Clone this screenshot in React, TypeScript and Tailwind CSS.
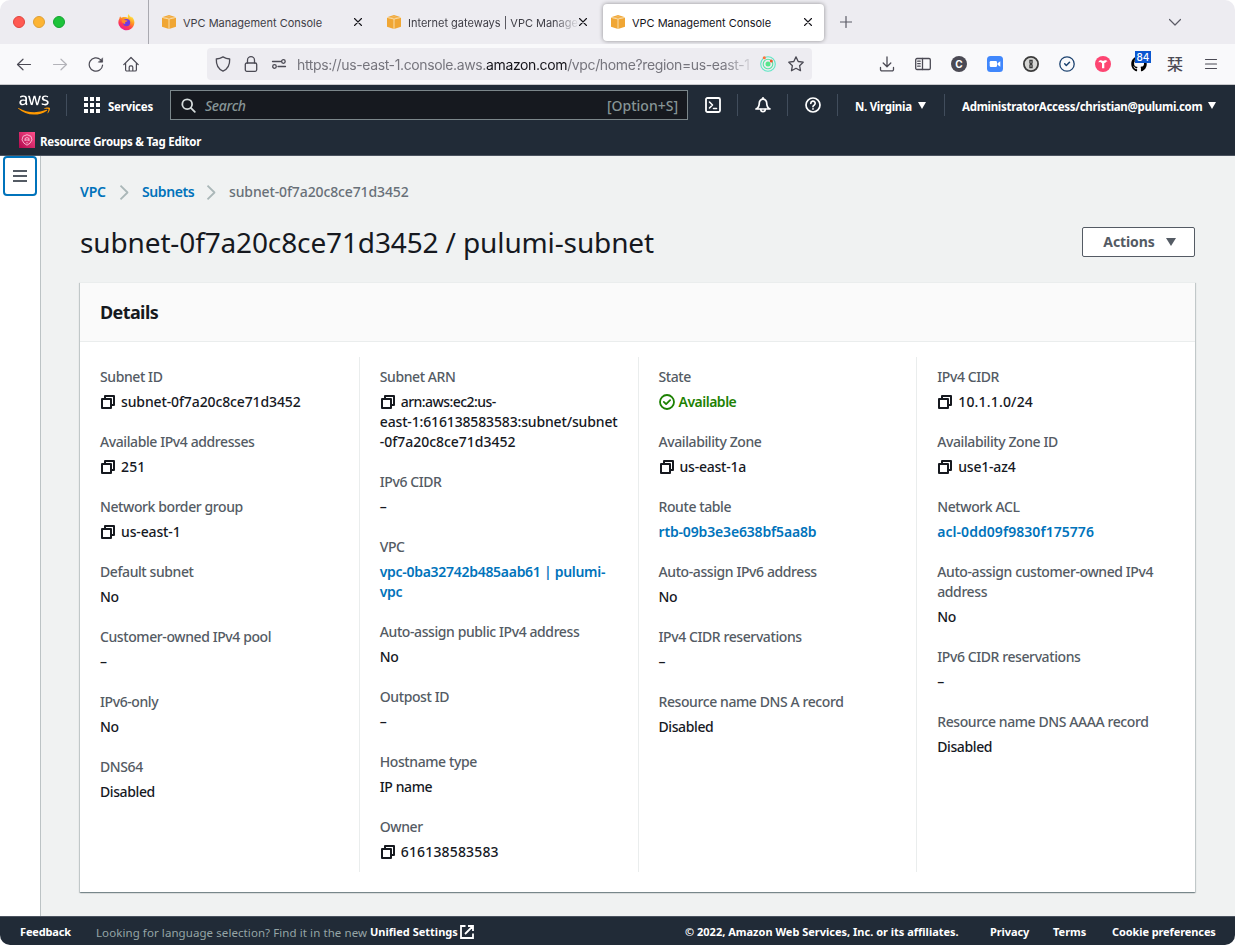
import type { ReactNode } from "react";
import { FaAws, FaGithub } from "react-icons/fa";

const stroke = {
  fill: "none",
  stroke: "currentColor",
  strokeLinecap: "round" as const,
  strokeLinejoin: "round" as const,
};

function BoxIcon() {
  return (
    <svg className="size-[14px] shrink-0" viewBox="0 0 14 14">
      <path d="M0 2.2 7 0l7 2.2v9.6L7 14l-7-2.2z" fill="#f0a634" />
      <path d="M0 2.4 7 4l7-1.6M7 4v10" stroke="#fbe3b8" strokeWidth="0.9" fill="none" />
      <path d="M2.2 3 7 1.7 11.8 3" stroke="#f8cf8c" strokeWidth="0.6" fill="none" />
    </svg>
  );
}

function CloseIcon() {
  return (
    <svg className="block size-[8px] shrink-0 text-[#15141a]" viewBox="0 0 8 8" {...stroke} strokeWidth="1.1">
      <path d="M.5.5l7 7M7.5.5l-7 7" />
    </svg>
  );
}

function Firefox() {
  return (
    <svg className="size-[17px]" viewBox="0 0 17 17">
      <defs>
        <linearGradient id="ff" x1="0.8" y1="0" x2="0.25" y2="1">
          <stop offset="0.1" stopColor="#ffe440" />
          <stop offset="0.4" stopColor="#ff9a22" />
          <stop offset="0.7" stopColor="#ff3b50" />
          <stop offset="1" stopColor="#e9189b" />
        </linearGradient>
      </defs>
      <path d="M10.5 0c.5 1.6 2 2.3 2.8 3.5.4-.3.3-.7.2-1 1.800 1.500 2.900 3.700 2.900 6A8 8 0 1 1 1.500 4.200c0-.8.3-1.500.7-2 .2.7.6 1.200 1.200 1.500C4.400 3.100 5.400 2.800 6.400 3 8 3 9.300 3.400 10.200 4 9.600 2.700 9.700 1.100 10.500 0z" fill="url(#ff)" />
      <circle cx="8.600" cy="8.600" r="3.600" fill="#7139e0" />
      <path d="M3.600 6.300c1.300-.9 2.800-.8 3.900 0 1 .1 1.900.1 2 .5-.1.700-1 .9-1.800 1.200-.8.400-.8 1.200-.2 1.800-1.800.5-3.600-.8-3.900-3.500z" fill="#ff8a2b" />
    </svg>
  );
}

function Tab({ title, titleClass = "" }: { title: string; titleClass?: string }) {
  return (
    <div className="flex h-full w-[225px] items-center pl-[13px] pr-[12px]">
      <BoxIcon />
      <span className={"ml-[7px] whitespace-nowrap pt-[3px] text-[11px] tracking-[-0.02px] " + titleClass}>{title}</span>
      <span className="ml-auto"><CloseIcon /></span>
    </div>
  );
}

function TabStrip() {
  return (
    <div className="flex h-[44px] items-center rounded-t-[10px] bg-[#edecf1] font-['Inter',sans-serif] text-[#3f3e46]">
      <div className="flex h-full w-[149px] items-center border-r border-[#a9a9b0] pl-[13px]">
        <i className="size-[12px] rounded-full border border-[#e0443e] bg-[#ff5a52]" />
        <i className="ml-[8px] size-[12px] rounded-full border border-[#dea035] bg-[#fdb433]" />
        <i className="ml-[8px] size-[12px] rounded-full border border-[#14a332] bg-[#1dc33a]" />
        <span className="ml-[53px]"><Firefox /></span>
      </div>
      <Tab title="VPC Management Console" />
      <Tab title="Internet gateways | VPC Manage" titleClass="[mask-image:linear-gradient(to_right,#000_145px,transparent_172px)]" />
      <div className="ml-[4px] flex h-[37px] w-[221px] items-center rounded-[4px] bg-white pl-[8px] pr-[12px] text-[#15141a] shadow-[0_0_4px_rgba(0,0,0,0.4)]">
        <BoxIcon />
        <span className="ml-[7px] whitespace-nowrap pt-[3px] text-[11px] tracking-[-0.02px]">VPC Management Console</span>
        <span className="ml-auto"><CloseIcon /></span>
      </div>
      <svg className="ml-[16px] size-[12px] text-[#5b5b66]" viewBox="0 0 12 12" {...stroke} strokeWidth="1.2"><path d="M6 .5v11M.5 6h11" /></svg>
      <svg className="ml-auto mr-[54px] size-[12px] text-[#5b5b66]" viewBox="0 0 12 12" {...stroke} strokeWidth="1.2"><path d="M.5 3.500 6 9l5.500-5.500" /></svg>
    </div>
  );
}

function Toolbar() {
  return (
    <div className="flex h-[40px] items-center bg-[#f9f9fb] pl-[16px] font-['Inter',sans-serif] text-[#4b4a54]">
      <svg className="size-[16px]" viewBox="0 0 16 16" {...stroke} strokeWidth="1.2"><path d="M14.500 8.500H1.500M7 3.200 1.500 8.500 7 13.800" /></svg>
      <svg className="ml-[20px] size-[16px] text-[#b3b3b9]" viewBox="0 0 16 16" {...stroke} strokeWidth="1.2"><path d="M1.500 8.500h13M9 3.200l5.500 5.300L9 13.800" /></svg>
      <svg className="ml-[20px] size-[16px]" viewBox="0 0 16 16" {...stroke} strokeWidth="1.2"><path d="M14.600 9A6.700 6.700 0 1 1 12.500 3.600L14 5" /><path d="M14.600 2.200v4h-4z" fill="currentColor" strokeWidth=".6" /></svg>
      <svg className="ml-[19px] size-[16px]" viewBox="0 0 16 16" {...stroke} strokeWidth="1.200"><path d="M.8 8.700 8 1.500l7.200 7.200M2.600 7v6.700A1.300 1.300 0 0 0 3.900 15h8.200a1.300 1.300 0 0 0 1.300-1.300V7M6.200 14.700v-3.500a1.300 1.300 0 0 1 1.300-1.300h1a1.300 1.300 0 0 1 1.300 1.300v3.500" /></svg>
      <div className="ml-[68px] flex h-[32px] w-[605px] items-center rounded-[4px] bg-[#edecf1] pl-[8px]">
        <svg className="size-[16px]" viewBox="0 0 16 16" {...stroke} strokeWidth="1.3"><path d="M8 .9c2.100 1.300 4.500 2 6.700 2.100.2 5.200-1.500 9.900-6.700 12.100C2.800 12.900 1.100 8.200 1.300 3 3.500 2.900 5.900 2.200 8 .9z" /></svg>
        <svg className="ml-[12px] size-[16px]" viewBox="0 0 16 16" {...stroke} strokeWidth="1.300"><rect x="2.300" y="7" width="11.400" height="8.300" rx="1.500" /><path d="M4.500 7V4.200a3.500 3.500 0 0 1 7 0V7" /></svg>
        <svg className="ml-[12px] size-[16px]" viewBox="0 0 16 16" {...stroke} strokeWidth="1.300"><path d="M1.500 5.500h8M7 10.500h7.500" /><circle cx="12.400" cy="5.500" r="1.800" /><circle cx="3.500" cy="10.500" r="1.800" /></svg>
        <div className="ml-[10px] w-[458px] whitespace-nowrap pt-px text-[14px] tracking-[-0.37px] text-[#76757d] [mask-image:linear-gradient(to_right,#000_425px,transparent_460px)]">
          https://us-east-1.console.aws.<span className="text-[#15141a]">amazon.com</span>/vpc/home?region=us-east-1
        </div>
        <svg className="ml-[5px] size-[16px]" viewBox="0 0 16 16"><circle cx="8" cy="8" r="7.300" fill="none" stroke="#5ee6c4" strokeWidth="1.100" /><circle cx="8" cy="8" r="4.800" fill="none" stroke="#55e5a0" strokeWidth="1.100" /><circle cx="8" cy="8" r="2.500" fill="#57e58b" /><circle cx="4.300" cy="1.800" r="1.500" fill="#ff7139" /><circle cx="11.300" cy="5" r="1.500" fill="#f4562b" /></svg>
        <svg className="ml-[12px] size-[16px]" viewBox="0 0 16 16" {...stroke} strokeWidth="1.300"><path d="m8 .9 2.200 4.600 5 .7-3.600 3.500.9 5L8 12.300l-4.500 2.400.9-5L.8 6.200l5-.7z" /></svg>
      </div>
      <div className="ml-auto mr-[16px] flex items-center gap-[20px]">
        <svg className="size-[16px]" viewBox="0 0 16 16" {...stroke} strokeWidth="1.300"><path d="M8 1v9.500M4.200 7 8 10.700 11.800 7M1.500 11.500v2a1.400 1.400 0 0 0 1.400 1.400h10.200a1.400 1.400 0 0 0 1.400-1.400v-2" /></svg>
        <svg className="size-[16px]" viewBox="0 0 16 16" {...stroke} strokeWidth="1.300"><rect x=".7" y="2.500" width="14.600" height="11" rx="1.300" /><path d="M7.500 2.500v11M2.700 5.200h2.500M2.700 7.700h2.500M2.700 10.200h2.500" /></svg>
        <span className="flex size-[16px] items-center justify-center rounded-full bg-[#4b4a54] text-[10px] font-bold text-white">C</span>
        <svg className="size-[16px]" viewBox="0 0 16 16"><rect width="16" height="16" rx="3.500" fill="#4087fc" /><rect x="2.700" y="5" width="7.300" height="6" rx="1.200" fill="#fff" /><path d="m10.500 7.300 2.800-2v5.400l-2.800-2z" fill="#fff" /></svg>
        <svg className="size-[16px]" viewBox="0 0 16 16"><circle cx="8" cy="8" r="7.100" fill="#d6d6d4" stroke="#3b3b3b" strokeWidth="1.800" /><path d="M6.300 3.700h3.400v3.600l-.7.7.7.8v3.500H6.300V8.800L7 8l-.7-.7z" fill="#3b3b3b" /><path d="M8 5v2M8 9v2" stroke="#d6d6d4" strokeWidth=".7" /></svg>
        <svg className="size-[16px]" viewBox="0 0 16 16" {...stroke} stroke="#1d4370" strokeWidth="1.300"><circle cx="8" cy="8" r="7.200" /><path d="m5.700 7.800 1.600 1.700 3.200-3.300" strokeWidth="1.500" /></svg>
        <svg className="size-[16px]" viewBox="0 0 16 16"><circle cx="8" cy="8" r="8" fill="#fd4572" /><path d="M3.300 6.300C4 3.800 6.500 3.700 8 4.900c1.700-1.200 3.800-.9 4.500.6-1 .1-1.700.2-2 1.300L9.300 7v5.300H7V7.200L5.300 6z" fill="#fff" /></svg>
        <span className="relative flex size-[16px]">
          <FaGithub className="size-[16px] text-black" />
          <span className="absolute -top-[5px] left-[4px] flex h-[12px] w-[16px] items-center justify-center bg-[#0b57d0] text-[10px] font-medium text-white">84</span>
        </span>
        <span className="w-[16px] text-[16px] font-medium leading-[16px] font-['Noto_Sans_CJK_JP',sans-serif] -mt-[2px]">栞</span>
        <svg className="size-[16px]" viewBox="0 0 16 16" {...stroke} strokeWidth="1.200"><path d="M2.500 3.500h11M2.500 8h11M2.500 12.500h11" /></svg>
      </div>
    </div>
  );
}

function Caret({ className }: { className: string }) {
  return <svg className={"shrink-0 " + className} viewBox="0 0 10 8" preserveAspectRatio="none"><path d="M0 0h10L5 8z" fill="currentColor" /></svg>;
}

function Sep() {
  return <i className="h-[22px] w-px shrink-0 bg-[#414d5c]" />;
}

function ConsoleNav() {
  return (
    <header className="h-[72px] border-y border-b-[#4b535f] border-t-[#c9c9cc] bg-[#212b37] text-white">
      <div className="flex h-[40px] items-center whitespace-nowrap">
        <svg width="0" height="0" className="w-0">
          <linearGradient id="aws" gradientUnits="userSpaceOnUse" x1="0" y1="0" x2="0" y2="512">
            <stop offset="0.58" stopColor="#fff" /><stop offset="0.58" stopColor="#ff9900" />
          </linearGradient>
        </svg>
        <FaAws className="ml-[18px] mr-[16px] h-[26px] w-[32px]" fill="url(#aws)" />
        <Sep />
        <svg className="ml-[17px] size-[16px]" viewBox="0 0 16 16" fill="currentColor">
          {[0, 6, 12].map((y) => [0, 6, 12].map((x) => <rect key={x + "-" + y} x={x} y={y} width="4" height="4" />))}
        </svg>
        <span className="ml-[8px] w-[54px] pt-[3px] text-[11.500px] font-bold tracking-[-0.25px]">Services</span>
        <div className="ml-[8px] flex h-[30px] w-[518px] items-center border border-[#7b868a] bg-[#16191f] pl-[10px] pr-[9px] text-[14px] font-medium text-[#879596]">
          <svg className="size-[15px] text-[#d5dbdb]" viewBox="0 0 15 15" {...stroke} strokeWidth="1.800"><circle cx="6.200" cy="6.200" r="4.900" /><path d="m9.800 9.800 4 4" /></svg>
          <span className="ml-[9px] italic tracking-[-0.3px]">Search</span>
          <span className="ml-auto tracking-[0px]">[Option+S]</span>
        </div>
        <svg className="ml-[17px] size-[16px]" viewBox="0 0 16 16" {...stroke} strokeWidth="1.800"><rect x="1" y="1" width="14" height="14" rx="1.500" /><path d="m4.500 5 3 3-3 3M8.500 11.500h3" strokeWidth="1.600" /></svg>
        <span className="ml-[16px] flex"><Sep /></span>
        <svg className="ml-[17px] size-[16px]" viewBox="0 0 16 16" {...stroke} strokeWidth="1.700"><path d="M1 12c2.700-1.300 3.300-3.500 3.300-6A3.700 3.700 0 0 1 8 2.200 3.700 3.700 0 0 1 11.700 6c0 2.500.6 4.700 3.300 6z" /><path d="M8 .8v1.400M5.800 12.400a2.200 2.200 0 0 0 4.400 0" /></svg>
        <span className="ml-[16px] flex"><Sep /></span>
        <svg className="ml-[17px] size-[16px]" viewBox="0 0 16 16" {...stroke} strokeWidth="1.700"><circle cx="8" cy="8" r="7" /><path d="M5.800 6.300a2.200 2.200 0 1 1 3.300 1.900C8.300 8.600 8 8.900 8 9.600M8 11.800v.1" /></svg>
        <span className="ml-[16px] flex"><Sep /></span>
        <span className="ml-[17px] w-[57px] pt-[3px] text-[11.500px] font-bold tracking-[-0.3px]">N. Virginia</span>
        <Caret className="ml-[6px] h-[7px] w-[8px]" />
        <span className="ml-[18px] flex"><Sep /></span>
        <span className="ml-[17px] w-[241px] pt-[3px] text-[11.500px] font-bold tracking-[-0.3px]">AdministratorAccess/christian@pulumi.com</span>
        <Caret className="ml-[5px] h-[7px] w-[8px]" />
      </div>
      <div className="flex h-[30px] items-center pl-[19px]">
        <svg className="size-[16px]" viewBox="0 0 16 16">
          <defs><linearGradient id="rg" x1="0" y1="1" x2="1" y2="0"><stop stopColor="#b0084d" /><stop offset="1" stopColor="#ff4f8b" /></linearGradient></defs>
          <rect width="16" height="16" fill="url(#rg)" />
          <path d="M8 2.700 12 4.300l1 3.600-2 3.300L8 13.200 5 11.200 3 7.900l1-3.600zM6 9V6.500l2-1 2 1V9M6 8h4M8 10v1.500" fill="none" stroke="#ffd5e4" strokeWidth=".8" />
        </svg>
        <span className="ml-[5px] whitespace-nowrap pt-[3px] text-[11.500px] font-bold tracking-[-0.26px]">Resource Groups &amp; Tag Editor</span>
      </div>
    </header>
  );
}

function CopyIcon() {
  return (
    <svg className="mr-[6px] ml-[1px] inline-block size-[14px] shrink-0 align-[-2px]" viewBox="0 0 14 14" fill="none" stroke="#16191f" strokeWidth="2" strokeLinejoin="round">
      <path d="M1 4h9v9H1zM4 4V1h9v9h-3" />
    </svg>
  );
}

function Field({ label, children, spacing = "tracking-[-0.4px]" }: { label: ReactNode; children: ReactNode; spacing?: string }) {
  return (
    <div className="flex flex-col gap-[5px]">
      <dt className="tracking-[-0.41px] text-[#545b64]">{label}</dt>
      <dd className={"text-[#16191f] " + spacing}>{children}</dd>
    </div>
  );
}

function Column({ children, first }: { children: ReactNode; first?: boolean }) {
  return (
    <dl className={"flex flex-col gap-[20px] whitespace-nowrap border-l py-[10px] " + (first ? "border-transparent pl-[19px]" : "border-[#eaeded] pl-[20px]")}>
      {children}
    </dl>
  );
}

function Link({ children, spacing = "tracking-[-0.4px]" }: { children: ReactNode; spacing?: string }) {
  return <a className={"font-semibold text-[#0073bb] " + spacing}>{children}</a>;
}

function Chevron({ className }: { className: string }) {
  return <svg className={"h-[15px] w-[10px] text-[#aab7b8] " + className} viewBox="0 0 10 15" {...stroke} strokeLinecap="butt" strokeWidth="1.800"><path d="m1.500.7 7 6.800-7 6.800" /></svg>;
}

function Details() {
  return (
    <section className="mt-[25px] h-[610px] border-t border-[#eaeded] bg-white shadow-[0_1px_1px_0_rgba(0,28,36,0.3),1px_1px_1px_0_rgba(0,28,36,0.15),-1px_1px_1px_0_rgba(0,28,36,0.15)]">
      <div className="flex h-[59px] items-center border-b border-[#eaeded] bg-[#fafafa] pl-[20px]">
        <h2 className="text-[18px] font-bold tracking-[-0.6px] text-[#16191f]">Details</h2>
      </div>
      <div className="mt-[15px] grid h-[515px] grid-cols-4 text-[14px] font-medium leading-[20px]">
        <Column first>
          <Field label="Subnet ID" spacing="tracking-[-0.12px]"><CopyIcon />subnet-0f7a20c8ce71d3452</Field>
          <Field label="Available IPv4 addresses" spacing="tracking-[0.15px]"><CopyIcon />251</Field>
          <Field label="Network border group" spacing="tracking-[-0.14px]"><CopyIcon />us-east-1</Field>
          <Field label="Default subnet">No</Field>
          <Field label="Customer-owned IPv4 pool">–</Field>
          <Field label="IPv6-only">No</Field>
          <Field label="DNS64">Disabled</Field>
        </Column>
        <Column>
          <Field label="Subnet ARN" spacing="tracking-[-0.15px]">
            <CopyIcon /><span className="tracking-[-0.55px]">arn:aws:ec2:us-</span><br />east-1:616138583583:subnet/subnet<br /><span className="tracking-[-0.02px]">-0f7a20c8ce71d3452</span>
          </Field>
          <Field label="IPv6 CIDR">–</Field>
          <Field label="VPC"><Link spacing="tracking-[-0.29px]">vpc-0ba32742b485aab61 | pulumi-<br />vpc</Link></Field>
          <Field label="Auto-assign public IPv4 address">No</Field>
          <Field label="Outpost ID">–</Field>
          <Field label="Hostname type">IP name</Field>
          <Field label="Owner" spacing="tracking-[0.16px]"><CopyIcon />616138583583</Field>
        </Column>
        <Column>
          <Field label="State">
            <span className="flex items-center font-semibold tracking-[-0.5px] text-[#1d8102]">
              <svg className="mr-[4px] size-[16px]" viewBox="0 0 16 16" {...stroke} strokeWidth="1.800"><circle cx="8" cy="8" r="7" /><path d="m4.800 7.900 2.300 2.200 4-4" /></svg>
              Available
            </span>
          </Field>
          <Field label="Availability Zone" spacing="tracking-[-0.22px]"><CopyIcon />us-east-1a</Field>
          <Field label="Route table"><Link spacing="tracking-[-0.16px]">rtb-09b3e3e638bf5aa8b</Link></Field>
          <Field label="Auto-assign IPv6 address">No</Field>
          <Field label="IPv4 CIDR reservations">–</Field>
          <Field label="Resource name DNS A record">Disabled</Field>
        </Column>
        <Column>
          <Field label="IPv4 CIDR" spacing="tracking-[0.17px]"><CopyIcon />10.1.1.0/24</Field>
          <Field label="Availability Zone ID" spacing="tracking-[-0.2px]"><CopyIcon />use1-az4</Field>
          <Field label="Network ACL"><Link spacing="tracking-[0.05px]">acl-0dd09f9830f175776</Link></Field>
          <Field label={<>Auto-assign customer-owned IPv4<br />address</>}>No</Field>
          <Field label="IPv6 CIDR reservations">–</Field>
          <Field label="Resource name DNS AAAA record">Disabled</Field>
        </Column>
      </div>
    </section>
  );
}

export default function App() {
  return (
    <div className="flex h-[945px] w-[1235px] flex-col overflow-hidden bg-white font-['Noto_Sans',sans-serif]">
      <TabStrip />
      <Toolbar />
      <ConsoleNav />
      <div className="flex h-[760px]">
        <aside className="w-[41px] shrink-0 border-r border-[#bcc3c5] bg-white pl-[3px]">
          <button className="flex h-[40px] w-[34px] items-center justify-center rounded-[4px] border-2 border-[#0073bb] bg-white">
            <svg className="h-[12px] w-[14px]" viewBox="0 0 14 12"><path d="M0 1h14M0 6h14M0 11h14" stroke="#545b64" strokeWidth="2" /></svg>
          </button>
        </aside>
        <main className="min-w-0 flex-1 bg-[#f0f2f2] pl-[39px] pr-[40px] pt-[26px]">
          <nav className="flex h-[20px] items-center whitespace-nowrap text-[14px] leading-[20px]">
            <span className="w-[26px]"><Link spacing="tracking-[-0.2px]">VPC</Link></span>
            <Chevron className="ml-[13px] mr-[13px]" />
            <span className="w-[52px]"><Link>Subnets</Link></span>
            <Chevron className="ml-[12px] mr-[13px]" />
            <span className="font-medium tracking-[-0.12px] text-[#687078]">subnet-0f7a20c8ce71d3452</span>
          </nav>
          <div className="mt-[25px] flex h-[30px] items-center justify-between">
            <h1 className="whitespace-nowrap text-[28px] tracking-[-0.13px] text-[#16191f]">subnet-0f7a20c8ce71d3452 / pulumi-subnet</h1>
            <button className="flex h-[30px] w-[113px] items-center rounded-[2px] border border-[#545b64] bg-white pb-px pl-[20px] text-[14px] font-bold text-[#545b64]">
              <span className="w-[52px] tracking-[-0.1px]">Actions</span>
              <Caret className="ml-[11px] h-[8px] w-[10px]" />
            </button>
          </div>
          <Details />
        </main>
      </div>
      <footer className="flex h-[29px] items-center whitespace-nowrap rounded-b-[10px] border-t border-[#4b535f] bg-[#212b37] pl-[20px] pr-[20px] pt-[3px] text-[11px] font-bold text-white">
        <span className="w-[51px] tracking-[-0.15px]">Feedback</span>
        <span className="ml-[25px] w-[274px] text-[11.500px] font-normal tracking-[0.08px] text-[#95a5a6]">Looking for language selection? Find it in the new</span>
        <span className="w-[88px]">Unified Settings</span>
        <svg className="mb-[2px] ml-[2px] size-[14px]" viewBox="0 0 14 14" fill="none" stroke="currentColor" strokeWidth="1.800"><path d="M5.500 1H1v12h12V8.500M8 1h5v5M13 1 5 9" /></svg>
        <span className="ml-auto w-[275px]">© 2022, Amazon Web Services, Inc. or its affiliates.</span>
        <span className="ml-[30px] w-[39px] tracking-[-0.1px]">Privacy</span>
        <span className="ml-[24px] w-[34px]">Terms</span>
        <span className="ml-[25px] w-[103px] tracking-[-0.1px]">Cookie preferences</span>
      </footer>
    </div>
  );
}
